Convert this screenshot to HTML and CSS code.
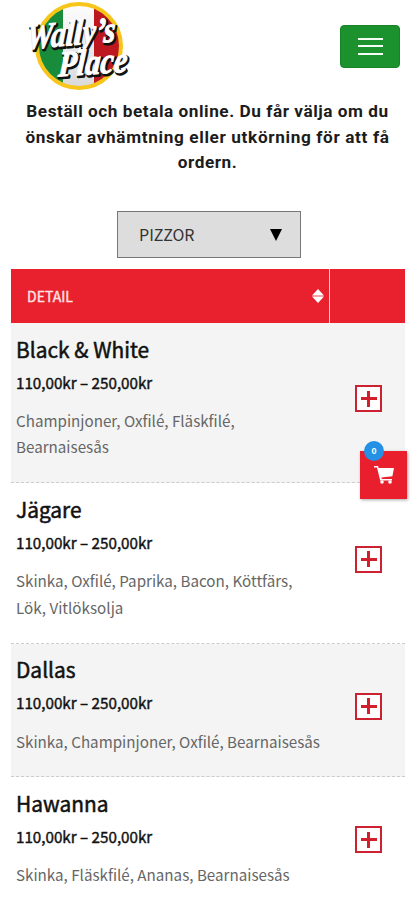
FILE: index.html
```html
<!DOCTYPE html>
<html lang="sv">
<head>
<meta charset="utf-8">
<meta name="viewport" content="width=device-width, initial-scale=1">
<title>Wally's Place</title>
<link rel="stylesheet" href="styles.css">
</head>
<body>
<header class="topbar">
  <svg class="logo" viewBox="0 0 110 95" role="img" aria-label="Wally's Place">
    <defs>
      <clipPath id="disc"><circle cx="55" cy="46" r="41.5"/></clipPath>
      <linearGradient id="shade" x1="0" y1="0" x2="0" y2="1">
        <stop offset="0" stop-color="#fff"/><stop offset="1" stop-color="#d6d6d6"/>
      </linearGradient>
    </defs>
    <g clip-path="url(#disc)">
      <rect width="40" height="95" fill="#198c3c"/>
      <rect x="39" width="32" height="95" fill="url(#shade)"/>
      <rect x="70" width="40" height="95" fill="#bd1720"/>
    </g>
    <circle cx="55" cy="46" r="42" fill="none" stroke="#f8c51b" stroke-width="4"/>
    <g class="logo-shadow">
      <text x="4.5" y="50.5" textLength="89" lengthAdjust="spacingAndGlyphs" transform="rotate(-5 7 51) skewX(-8) translate(6 0)">Wally’s</text>
      <text x="36" y="78" textLength="69" lengthAdjust="spacingAndGlyphs" transform="rotate(-4 36 77) skewX(-8) translate(10 0)">Place</text>
    </g>
    <g class="logo-text">
      <text x="3" y="49" textLength="89" lengthAdjust="spacingAndGlyphs" transform="rotate(-5 5 49) skewX(-8) translate(6 0)">Wally’s</text>
      <text x="34.5" y="76.5" textLength="69" lengthAdjust="spacingAndGlyphs" transform="rotate(-4 34 75) skewX(-8) translate(10 0)">Place</text>
    </g>
  </svg>
  <button class="menu" aria-label="Meny"><span></span><span></span><span></span></button>
</header>
<main>
  <p class="intro">Beställ och betala online. Du får välja om du<br><span class="intro-wide">önskar avhämtning eller utkörning för att få</span><br>ordern.</p>
  <button class="category"><span>PIZZOR</span><svg width="12" height="12" viewBox="0 0 12 12"><path d="M0 0h12L6 12z"/></svg></button>
  <div class="table">
    <div class="row head">
      <div class="detail"><span>DETAIL</span><svg width="12" height="14" viewBox="0 0 12 14"><path d="M0 6.4 6 0l6 6.4zM0 7.6h12L6 14z" fill="#fff"/><path d="M1 7h10" stroke="#f4b6ba"/></svg></div>
      <div class="action"></div>
    </div>
    <div class="row">
      <div class="detail"><h2>Black &amp; White</h2><p class="price">110,00kr – 250,00kr</p><p class="desc">Champinjoner, Oxfilé, Fläskfilé,<br>Bearnaisesås</p></div>
      <div class="action"><button class="add" aria-label="Lägg till"></button></div>
    </div>
    <div class="row">
      <div class="detail"><h2>Jägare</h2><p class="price">110,00kr – 250,00kr</p><p class="desc">Skinka, Oxfilé, Paprika, Bacon, Köttfärs,<br>Lök, Vitlöksolja</p></div>
      <div class="action"><button class="add" aria-label="Lägg till"></button></div>
    </div>
    <div class="row">
      <div class="detail"><h2>Dallas</h2><p class="price">110,00kr – 250,00kr</p><p class="desc">Skinka, Champinjoner, Oxfilé, Bearnaisesås</p></div>
      <div class="action"><button class="add" aria-label="Lägg till"></button></div>
    </div>
    <div class="row">
      <div class="detail"><h2>Hawanna</h2><p class="price">110,00kr – 250,00kr</p><p class="desc">Skinka, Fläskfilé, Ananas, Bearnaisesås</p></div>
      <div class="action"><button class="add" aria-label="Lägg till"></button></div>
    </div>
  </div>
</main>
<a class="cart" aria-label="Varukorg">
  <svg width="20" height="18" viewBox="0 0 20 18"><path d="M0 0h4l.7 2H20l-1.6 8.2-11 1.2.4 1.6H18v1.4H6.2L3 1.6H0z" fill="#fff"/><circle cx="8" cy="16" r="1.8" fill="#fff"/><circle cx="16" cy="16" r="1.8" fill="#fff"/></svg>
  <span class="count">0</span>
</a>
</body>
</html>
```
FILE: styles.css
```css
* { box-sizing: border-box; }
html { height: 900px; overflow: hidden; }
body {
  margin: 0;
  height: 900px;
  overflow: hidden;
  background: #fff;
  font-family: "Noto Sans CJK SC", "Open Sans", sans-serif;
  color: #111;
}
h2, p { margin: 0; }
button { font: inherit; padding: 0; }

.topbar {
  display: flex;
  justify-content: space-between;
  height: 99px;
  padding: 0 15px 0 24px;
}
.logo { width: 110px; height: 95px; overflow: visible; }
.logo text {
  font-family: "Liberation Serif", serif;
  font-size: 36px;
  font-weight: bold;
  font-style: italic;
}
.logo-shadow text { fill: #111; stroke: #111; stroke-width: 3; stroke-linejoin: round; }
.logo-text text { fill: #fff; stroke: #fff; stroke-width: 1; stroke-linejoin: round; }

.menu {
  display: flex;
  flex-direction: column;
  align-items: center;
  justify-content: center;
  gap: 5px;
  width: 60px;
  height: 43px;
  margin-top: 25px;
  border: 1px solid #168326;
  border-radius: 4px;
  background: #1c922e;
}
.menu span { width: 25px; height: 2px; margin-bottom: 0.5px; background: #f2fff2; }

.intro {
  height: 76px;
  text-align: center;
  font-family: Roboto, sans-serif;
  font-weight: 700;
  font-size: 17.2px;
  line-height: 25.5px;
  letter-spacing: 0.54px;
  color: #1c1c1c;
  white-space: nowrap;
}
.intro-wide { letter-spacing: 0.64px; }
.category {
  display: flex;
  align-items: center;
  justify-content: space-between;
  width: 184px;
  height: 47px;
  margin: 36px 0 0 117px;
  padding: 0 18px 0 21px;
  border: 1px solid #777;
  background: #ddd;
  font-size: 16px;
  color: #333;
}
.category span { margin-top: -2px; }

.table { margin: 11px 10px 0 11px; }
.row {
  display: flex;
  border-bottom: 1px dashed #ccc;
}
.row:nth-child(even) { background: #f4f4f4; }
.row .detail { width: 319px; padding: 10.6px 0 22.3px 5px; }
.row .action { display: flex; flex: 1; align-items: center; padding: 0 0 7.8px 25px; }
.row.head { height: 54px; border: 0; background: #e9202d; }
.head .detail {
  display: flex;
  align-items: center;
  justify-content: space-between;
  padding: 0 5px 0 16px;
  border-right: 1px solid #fbd0d3;
  font-size: 14px;
  color: #ffe2e4;
  -webkit-text-stroke: 0.4px #ffe2e4;
}
h2 {
  font-size: 20.9px;
  line-height: 30px;
  font-weight: 400;
  -webkit-text-stroke: 0.5px #111;
}
.price {
  margin-top: 6px;
  font-size: 15.2px;
  line-height: 24px;
  -webkit-text-stroke: 0.4px #111;
}
.desc {
  margin-top: 13.4px;
  font-size: 15.18px;
  line-height: 26.5px;
  color: #666;
  white-space: nowrap;
}
.add {
  position: relative;
  width: 27px;
  height: 27px;
  border: 2px solid #cb2130;
  background:
    linear-gradient(#d21f2c, #d21f2c) center / 16px 3px no-repeat,
    linear-gradient(#d21f2c, #d21f2c) center / 3px 16px no-repeat,
    #fff;
}

.cart {
  position: absolute;
  left: 360px;
  top: 451px;
  display: flex;
  align-items: center;
  justify-content: center;
  width: 47px;
  height: 48px;
  background: #ea1f2d;
  box-shadow: 1px 1px 3px rgba(0, 0, 0, 0.35);
}
.count {
  position: absolute;
  left: 4px;
  top: -10px;
  width: 20px;
  height: 20px;
  border-radius: 50%;
  background: #2491e5;
  color: #fff;
  font: bold 9px/20px "Liberation Sans", sans-serif;
  text-align: center;
}
```
